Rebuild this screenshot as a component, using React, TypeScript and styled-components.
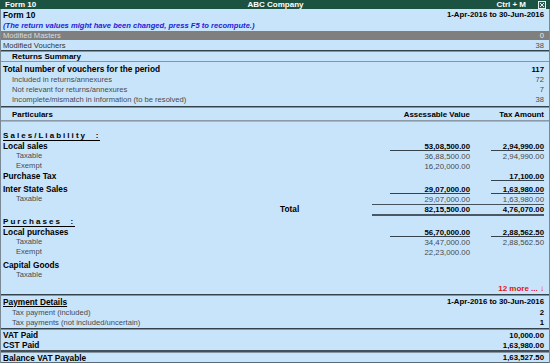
import React from "react";
import styled, { createGlobalStyle } from "styled-components";

const GlobalStyle = createGlobalStyle`
  html, body { margin: 0; padding: 0; background: #c8e4fa; }
  body { font-family: "Liberation Sans", Arial, sans-serif; }
  * { box-sizing: border-box; }
`;

const Screen = styled.div`
  width: 550px;
  height: 363px;
  overflow: hidden;
  background: #c8e4fa;
  display: flex;
  flex-direction: column;
  color: #000;
`;

const TitleBar = styled.div`
  height: 9px;
  flex: none;
  background: #1c5242;
  color: #fff;
  font-weight: 700;
  font-size: 8px;
  line-height: 9px;
  display: grid;
  grid-template-columns: 1fr auto 1fr;
  align-items: center;
  padding: 0 4px 0 5px;
`;

const TitleRight = styled.div`
  display: flex;
  justify-content: flex-end;
  align-items: center;
  gap: 12px;
`;

const Body = styled.div`
  flex: 1;
  display: flex;
  flex-direction: column;
  border-left: 1px solid #7a8894;
  border-right: 1px solid #7a8894;
  min-height: 0;
`;

const Row = styled.div<{ $h?: number; $indent?: number; $bg?: string }>`
  display: flex;
  justify-content: space-between;
  align-items: center;
  flex: none;
  height: ${(p) => p.$h ?? 10}px;
  padding: 0 5px 0 ${(p) => p.$indent ?? 2}px;
  background: ${(p) => p.$bg ?? "transparent"};
  white-space: nowrap;
`;

const Strong = styled.span<{ $size?: number }>`
  font-size: ${(p) => p.$size ?? 8.3}px;
  font-weight: 700;
  color: #000;
`;

const Muted = styled.span<{ $color?: string }>`
  font-size: 7.6px;
  color: ${(p) => p.$color ?? "#4a4a4a"};
`;

const Notice = styled.span`
  font-size: 7.6px;
  font-weight: 700;
  font-style: italic;
  color: #1f22d6;
`;

const Rule = styled.div<{ $top?: number; $bottom?: number; $dark?: string; $light?: string }>`
  flex: none;
  height: ${(p) => (p.$top ?? 1) + (p.$bottom ?? 1)}px;
  border-top: ${(p) => p.$top ?? 1}px solid ${(p) => p.$dark ?? "#34424c"};
  border-bottom: ${(p) => p.$bottom ?? 1}px solid ${(p) => p.$light ?? "#8494a0"};
`;

const Spacer = styled.div<{ $h: number }>`
  flex: none;
  height: ${(p) => p.$h}px;
`;

const Section = styled.div`
  display: flex;
  flex-direction: column;
  flex: none;
`;

const TableSection = styled.div`
  flex: 1;
  display: flex;
  flex-direction: column;
  padding-right: 5px;
  min-height: 0;
`;

const ColumnHead = styled.div`
  display: grid;
  grid-template-columns: 1fr 80px 21px 53px;
  height: 12px;
  align-items: center;
  padding: 0 5px 0 11px;
  flex: none;
  font-size: 7.9px;
  font-weight: 700;
  white-space: nowrap;
`;

const HeadCell = styled.div<{ $col?: number }>`
  grid-column: ${(p) => p.$col ?? "auto"};
  text-align: ${(p) => (p.$col ? "right" : "left")};
`;

const GroupHeading = styled.div`
  height: 11px;
  display: flex;
  align-items: center;
  padding-left: 2px;
  flex: none;
`;

const SpacedTitle = styled.span`
  display: inline-block;
  font-size: 8px;
  font-weight: 700;
  letter-spacing: 2.05px;
  line-height: 9px;
  border-bottom: 1px solid #000;
  white-space: pre;
`;

const LineRow = styled.div<{ $gapTop?: number }>`
  display: grid;
  grid-template-columns: 1fr 80px 21px 53px;
  height: 10px;
  margin-top: ${(p) => p.$gapTop ?? 0}px;
  flex: none;
  white-space: nowrap;
`;

const LineLabel = styled.div<{ $indent?: number; $strong?: boolean }>`
  grid-column: 1;
  padding-left: ${(p) => p.$indent ?? 2}px;
  line-height: 10px;
  font-size: ${(p) => (p.$strong ? 8.3 : 7.6)}px;
  font-weight: ${(p) => (p.$strong ? 700 : 400)};
  color: ${(p) => (p.$strong ? "#000" : "#4a4a4a")};
`;

const Amount = styled.div<{ $col: number; $strong?: boolean; $rule?: boolean }>`
  grid-column: ${(p) => p.$col};
  text-align: right;
  line-height: 9px;
  height: 10px;
  padding-top: 1px;
  font-size: 7.8px;
  font-weight: ${(p) => (p.$strong ? 700 : 400)};
  color: ${(p) => (p.$strong ? "#000" : "#4a4a4a")};
  border-bottom: 1px solid ${(p) => (p.$rule ? "#36434d" : "transparent")};
`;

const TotalRow = styled.div`
  display: flex;
  height: 12px;
  flex: none;
`;

const TotalLabel = styled.div`
  flex: 1;
  padding-left: 279px;
  line-height: 11px;
  font-size: 8.3px;
  font-weight: 700;
`;

const TotalBand = styled.div`
  width: 172px;
  display: grid;
  grid-template-columns: 18px 80px 21px 53px;
  border-top: 1px solid #45525c;
  border-bottom: 2px solid #4a5863;
`;

const TotalAmount = styled.div<{ $col: number }>`
  grid-column: ${(p) => p.$col};
  text-align: right;
  font-size: 7.8px;
  font-weight: 700;
  line-height: 9px;
`;

const MoreRow = styled.div`
  margin-top: auto;
  height: 10px;
  flex: none;
  text-align: right;
  font-size: 8px;
  font-weight: 700;
  color: #e01414;
  line-height: 10px;
`;

const Underlined = styled.span`
  font-size: 8.3px;
  font-weight: 700;
  text-decoration: underline;
`;

const CloseBox = () => (
  <svg width="8" height="8" viewBox="0 0 8 8" aria-hidden>
    <rect x="0.5" y="0.5" width="7" height="7" fill="#2c5e4f" stroke="#e8eeee" />
    <path d="M2 2 L6 6 M6 2 L2 6" stroke="#e8eeee" strokeWidth="1" />
  </svg>
);

type Line = {
  label: string;
  strong?: boolean;
  indent?: number;
  gap?: number;
  av?: string;
  tax?: string;
};

const sales: Line[] = [
  { label: "Local sales", strong: true, av: "53,08,500.00", tax: "2,94,990.00" },
  { label: "Taxable", indent: 15, av: "36,88,500.00", tax: "2,94,990.00" },
  { label: "Exempt", indent: 15, av: "16,20,000.00" },
  { label: "Purchase Tax", strong: true, tax: "17,100.00" },
  { label: "Inter State Sales", strong: true, gap: 3, av: "29,07,000.00", tax: "1,63,980.00" },
  { label: "Taxable", indent: 15, av: "29,07,000.00", tax: "1,63,980.00" },
];

const purchases: Line[] = [
  { label: "Local purchases", strong: true, av: "56,70,000.00", tax: "2,88,562.50" },
  { label: "Taxable", indent: 15, av: "34,47,000.00", tax: "2,88,562.50" },
  { label: "Exempt", indent: 15, av: "22,23,000.00" },
  { label: "Capital Goods", strong: true, gap: 3 },
  { label: "Taxable", indent: 15 },
];

const renderLine = (l: Line, i: number) => (
  <LineRow key={i} $gapTop={l.gap}>
    <LineLabel $indent={l.indent} $strong={l.strong}>
      {l.label}
    </LineLabel>
    {l.av && (
      <Amount $col={2} $strong={l.strong} $rule={l.strong}>
        {l.av}
      </Amount>
    )}
    {l.tax && (
      <Amount $col={4} $strong={l.strong} $rule={l.strong}>
        {l.tax}
      </Amount>
    )}
  </LineRow>
);

export default function App() {
  return (
    <>
      <GlobalStyle />
      <Screen>
        <TitleBar>
          <span>Form 10</span>
          <span>ABC Company</span>
          <TitleRight>
            <span>Ctrl + M</span>
            <CloseBox />
          </TitleRight>
        </TitleBar>
        <Body>
          <Section>
            <Row $h={11}>
              <Strong>Form 10</Strong>
              <Strong $size={7.8}>1-Apr-2016 to 30-Jun-2016</Strong>
            </Row>
            <Row>
              <Notice>(The return values might have been changed, press F5 to recompute.)</Notice>
            </Row>
            <Spacer $h={1} />
            <Row $h={9} $bg="#7f7f7f">
              <Muted $color="#dcdcdc">Modified Masters</Muted>
              <Muted $color="#ececec">0</Muted>
            </Row>
            <Row>
              <Muted $color="#333">Modified Vouchers</Muted>
              <Muted>38</Muted>
            </Row>
          </Section>
          <Rule />
          <Row $h={9} $indent={11}>
            <Strong $size={8}>Returns Summary</Strong>
          </Row>
          <Rule $top={1} $bottom={0} $dark="#8796a2" />
          <Spacer $h={2} />
          <Section>
            <Row>
              <Strong>Total number of vouchers for the period</Strong>
              <Strong $size={7.8}>117</Strong>
            </Row>
            <Row $indent={11}>
              <Muted>Included in returns/annexures</Muted>
              <Muted>72</Muted>
            </Row>
            <Row $indent={11}>
              <Muted>Not relevant for returns/annexures</Muted>
              <Muted>7</Muted>
            </Row>
            <Row $indent={11}>
              <Muted>Incomplete/mismatch in information (to be resolved)</Muted>
              <Muted>38</Muted>
            </Row>
          </Section>
          <Spacer $h={2} />
          <Rule />
          <ColumnHead>
            <HeadCell>Particulars</HeadCell>
            <HeadCell $col={2}>Assessable Value</HeadCell>
            <HeadCell $col={4}>Tax Amount</HeadCell>
          </ColumnHead>
          <Rule $top={1} $bottom={1} $dark="#8a99a5" $light="#a6b6c2" />
          <TableSection>
            <Spacer $h={8} />
            <GroupHeading>
              <SpacedTitle>Sales/Liability  :</SpacedTitle>
            </GroupHeading>
            {sales.map(renderLine)}
            <TotalRow>
              <TotalLabel>Total</TotalLabel>
              <TotalBand>
                <TotalAmount $col={2}>82,15,500.00</TotalAmount>
                <TotalAmount $col={4}>4,76,070.00</TotalAmount>
              </TotalBand>
            </TotalRow>
            <GroupHeading>
              <SpacedTitle>Purchases  :</SpacedTitle>
            </GroupHeading>
            {purchases.map(renderLine)}
            <MoreRow>12 more ... ↓</MoreRow>
          </TableSection>
          <Rule />
          <Section>
            <Row $h={11}>
              <Underlined>Payment Details</Underlined>
              <Strong $size={7.8}>1-Apr-2016 to 30-Jun-2016</Strong>
            </Row>
            <Row $indent={11}>
              <Muted>Tax payment (included)</Muted>
              <Strong $size={7.8}>2</Strong>
            </Row>
            <Row $indent={11}>
              <Muted>Tax payments (not included/uncertain)</Muted>
              <Strong $size={7.8}>1</Strong>
            </Row>
          </Section>
          <Spacer $h={1} />
          <Rule />
          <Section>
            <Row>
              <Strong>VAT Paid</Strong>
              <Strong $size={7.8}>10,000.00</Strong>
            </Row>
            <Row>
              <Strong>CST Paid</Strong>
              <Strong $size={7.8}>1,63,980.00</Strong>
            </Row>
          </Section>
          <Rule $top={2} $bottom={1} $dark="#44515b" />
          <Row $h={9}>
            <Strong>Balance VAT Payable</Strong>
            <Strong $size={7.8}>1,63,527.50</Strong>
          </Row>
          <Rule $top={1} $bottom={0} $dark="#5c6a75" />
        </Body>
      </Screen>
    </>
  );
}
